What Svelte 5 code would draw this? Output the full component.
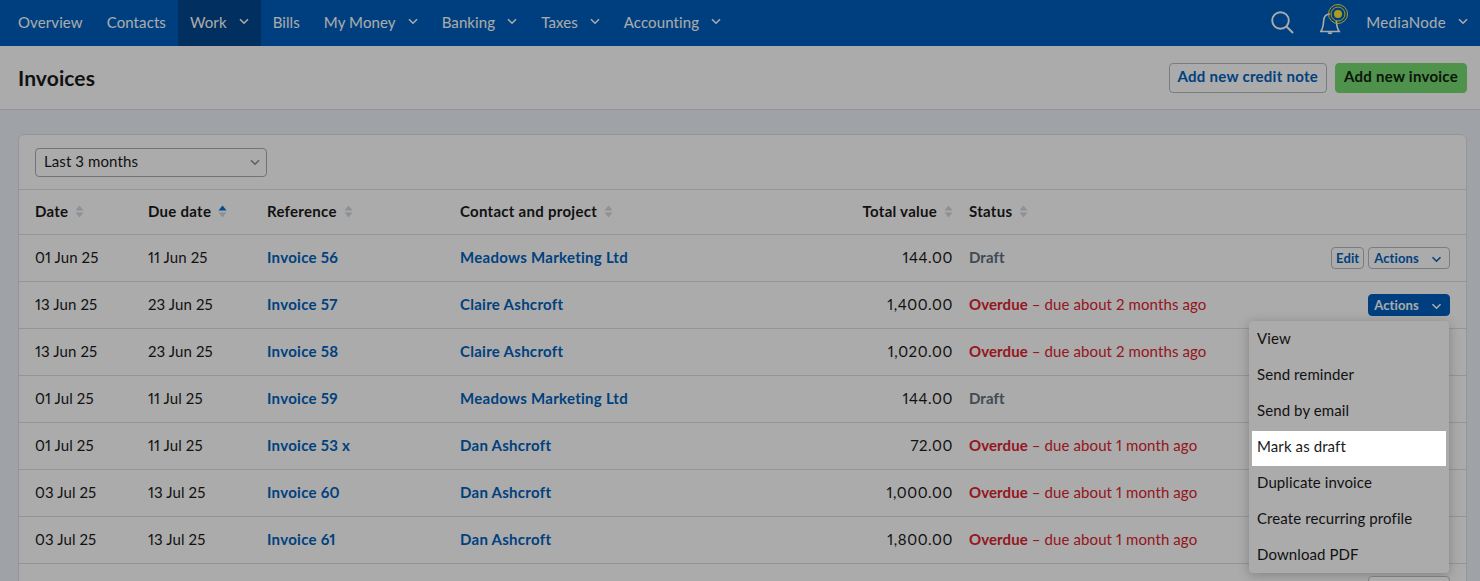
<script>
  const nav = [
    { label: 'Overview' },
    { label: 'Contacts' },
    { label: 'Work', caret: true, active: true },
    { label: 'Bills' },
    { label: 'My Money', caret: true },
    { label: 'Banking', caret: true },
    { label: 'Taxes', caret: true },
    { label: 'Accounting', caret: true }
  ];

  const columns = [
    { label: 'Date' },
    { label: 'Due date', sorted: true },
    { label: 'Reference' },
    { label: 'Contact and project' },
    { label: 'Total value', right: true },
    { label: 'Status' }
  ];

  const rows = [
    { date: '01 Jun 25', due: '11 Jun 25', ref: 'Invoice 56', contact: 'Meadows Marketing Ltd', total: '144.00', status: 'draft', edit: true },
    { date: '13 Jun 25', due: '23 Jun 25', ref: 'Invoice 57', contact: 'Claire Ashcroft', total: '1,400.00', status: 'overdue', ago: 'due about 2 months ago', open: true },
    { date: '13 Jun 25', due: '23 Jun 25', ref: 'Invoice 58', contact: 'Claire Ashcroft', total: '1,020.00', status: 'overdue', ago: 'due about 2 months ago' },
    { date: '01 Jul 25', due: '11 Jul 25', ref: 'Invoice 59', contact: 'Meadows Marketing Ltd', total: '144.00', status: 'draft' },
    { date: '01 Jul 25', due: '11 Jul 25', ref: 'Invoice 53 x', contact: 'Dan Ashcroft', total: '72.00', status: 'overdue', ago: 'due about 1 month ago' },
    { date: '03 Jul 25', due: '13 Jul 25', ref: 'Invoice 60', contact: 'Dan Ashcroft', total: '1,000.00', status: 'overdue', ago: 'due about 1 month ago' },
    { date: '03 Jul 25', due: '13 Jul 25', ref: 'Invoice 61', contact: 'Dan Ashcroft', total: '1,800.00', status: 'overdue', ago: 'due about 1 month ago' },
    { date: '07 Jul 25', due: '17 Jul 25', ref: 'Invoice 62 2', contact: 'Dan Ashcroft', total: '72.00', status: 'overdue', ago: 'due about 1 month ago', actions: true }
  ];

  const menu = ['View', 'Send reminder', 'Send by email', 'Mark as draft', 'Duplicate invoice', 'Create recurring profile', 'Download PDF'];
</script>

{#snippet caret()}
  <svg class="caret" width="10" height="7" viewBox="0 0 10 7"><path d="M1 1.2 5 5.2 9 1.2" fill="none" stroke="currentColor" stroke-width="1.6" /></svg>
{/snippet}

<div class="page">
  <header class="topbar">
    <nav>
      {#each nav as item}
        <a href="#top" class="nav-item" class:active={item.active}>
          {item.label}
          {#if item.caret}{@render caret()}{/if}
        </a>
      {/each}
    </nav>
    <div class="top-right">
      <svg class="search" width="24" height="24" viewBox="0 0 24 24"><circle cx="9.500" cy="9.500" r="8.300" fill="none" stroke="currentColor" stroke-width="1.900" /><path d="M15.500 15.500 22 22" stroke="currentColor" stroke-width="1.900" /></svg>
      <svg class="bell" width="30" height="38" viewBox="0 0 30 38">
        <path d="M10 10C5.500 10 3.800 13.500 3.600 17 3.400 22 2.500 25 0.800 27.500H19.200C17.500 25 16.600 22 16.400 17" fill="none" stroke="#fff" stroke-width="1.600" />
        <path d="M7.500 28.200a2.500 2 0 0 0 5 0" fill="#fff" />
        <circle cx="18" cy="10" r="9.500" fill="none" stroke="#ffe92e" stroke-width="1" />
        <circle cx="18" cy="10" r="7" fill="none" stroke="#ffe92e" stroke-width="1" />
        <circle cx="18" cy="10" r="4" fill="#ffe92e" />
      </svg>
      <a href="#top" class="nav-item user">MediaNode {@render caret()}</a>
    </div>
  </header>

  <div class="titlebar">
    <h1>Invoices</h1>
    <div class="title-actions">
      <button class="btn outline">Add new credit note</button>
      <button class="btn green">Add new invoice</button>
    </div>
  </div>

  <main>
    <section class="card">
      <div class="filter">
        <div class="select">Last 3 months {@render caret()}</div>
      </div>
      <table>
        <colgroup>
          <col /><col /><col /><col /><col /><col /><col />
        </colgroup>
        <thead>
          <tr>
            {#each columns as col}
              <th class:right={col.right}>
                {col.label}
                <svg class="sort" width="9" height="13" viewBox="0 0 9 13">
                  <path d="M4.500 0.500 8.500 5.500H0.500Z" fill={col.sorted ? '#006fd5' : '#d3d7df'} />
                  <path d="M4.500 12.500 8.500 7.500H0.500Z" fill="#d3d7df" />
                </svg>
              </th>
            {/each}
            <th></th>
          </tr>
        </thead>
        <tbody>
          {#each rows as row}
            <tr>
              <td>{row.date}</td>
              <td>{row.due}</td>
              <td><a href="#top" class="link">{row.ref}</a></td>
              <td><a href="#top" class="link">{row.contact}</a></td>
              <td class="right total">{row.total}</td>
              <td>
                {#if row.status === 'draft'}
                  <span class="draft">Draft</span>
                {:else}
                  <span class="overdue"><b>Overdue</b> – {row.ago}</span>
                {/if}
              </td>
              <td class="row-actions">
                <div class="action-wrap">
                  {#if row.edit}<button class="mini edit">Edit</button>{/if}
                  {#if row.edit || row.actions}
                    <button class="mini">Actions {@render caret()}</button>
                  {/if}
                  {#if row.open}
                    <button class="mini open">Actions {@render caret()}</button>
                  {/if}
                </div>
                {#if row.open}
                  <ul class="menu">
                    {#each menu as item}
                      <li class:spot={item === 'Mark as draft'}>{item}</li>
                    {/each}
                  </ul>
                {/if}
              </td>
            </tr>
          {/each}
        </tbody>
      </table>
    </section>
  </main>
  <div class="overlay"></div>
</div>

<style>
  :global(body) {
    margin: 0;
    overflow: hidden;
  }

  .page {
    position: relative;
    height: 581px;
    overflow: hidden;
    background: #edf2fa;
    color: #1a1a1a;
    font-family: Lato, "Noto Sans", sans-serif;
    font-size: 15px;
    letter-spacing: 0.1px;
    font-variant-numeric: proportional-nums;
  }

  .overlay {
    position: absolute;
    inset: 0;
    z-index: 10;
    background: rgba(0, 0, 0, 0.33);
  }

  a {
    text-decoration: none;
  }

  .topbar {
    height: 46px;
    display: flex;
    justify-content: space-between;
    background: #005fbe;
    color: #fff;
  }

  nav {
    display: flex;
    padding-left: 6px;
  }

  .nav-item {
    display: flex;
    align-items: center;
    gap: 12px;
    padding: 0 12px 3px;
    color: #fff;
    letter-spacing: 0.1px;
  }

  .nav-item.active {
    background: #00478f;
  }

  .top-right {
    display: flex;
    align-items: center;
  }

  .search {
    margin-right: 25px;
  }

  .bell {
    margin-right: 4px;
  }

  .user {
    height: 100%;
    letter-spacing: 0.3px;
    box-sizing: border-box;
  }

  .titlebar {
    height: 64px;
    display: flex;
    align-items: center;
    justify-content: space-between;
    padding: 0 13px 0 18px;
    background: #fff;
    border-bottom: 1px solid #dcdfe3;
    box-sizing: border-box;
  }

  h1 {
    margin: 0;
    font-size: 21px;
    font-weight: 700;
    letter-spacing: 0.1px;
  }

  .title-actions {
    display: flex;
    gap: 8px;
  }

  .btn {
    height: 30px;
    padding: 0 8px 3px;
    border-radius: 4px;
    font: 700 15px Lato, sans-serif;
    letter-spacing: 0.27px;
  }

  .btn.outline {
    background: #fff;
    border: 1px solid #b6babf;
    color: #0062bd;
  }

  .btn.green {
    background: #75da71;
    border: 1px solid #75da71;
    color: #14210f;
  }

  main {
    padding: 24px 13px 0 18px;
  }

  .card {
    background: #fff;
    border: 1px solid #dcdfe3;
    border-radius: 6px;
  }

  .filter {
    height: 54px;
    display: flex;
    align-items: center;
    padding-left: 16px;
    border-bottom: 1px solid #dcdfe3;
  }

  .select {
    width: 232px;
    height: 29px;
    box-sizing: border-box;
    padding: 0 6px 2px 8px;
    display: flex;
    align-items: center;
    justify-content: space-between;
    border: 1px solid #a8adb3;
    border-radius: 4px;
  }

  .select .caret {
    color: #8b9299;
    margin-top: 2px;
  }

  table {
    width: 100%;
    table-layout: fixed;
    border-collapse: collapse;
  }

  col:nth-child(1) { width: 121px; }
  col:nth-child(2) { width: 119px; }
  col:nth-child(3) { width: 193px; }
  col:nth-child(4) { width: 290px; }
  col:nth-child(5) { width: 219px; }
  col:nth-child(6) { width: 300px; }

  th, td {
    height: 44px;
    padding: 0 8px 2px;
    text-align: left;
    border-bottom: 1px solid #dcdfe3;
    white-space: nowrap;
  }

  th:first-child, td:first-child {
    padding-left: 16px;
  }

  th {
    height: 42px;
    font-weight: 700;
    letter-spacing: 0.28px;
  }

  .sort {
    margin-left: 3px;
    vertical-align: -1px;
  }

  .right {
    text-align: right;
  }

  .total {
    letter-spacing: 0.6px;
  }

  .link {
    color: #0062bd;
    font-weight: 700;
    letter-spacing: 0.28px;
  }

  .draft {
    color: #5f6f7c;
    font-weight: 700;
  }

  .overdue {
    color: #e0232e;
  }

  .row-actions {
    position: relative;
    padding: 0 16px 0 0;
  }

  .action-wrap {
    display: flex;
    justify-content: flex-end;
    gap: 4px;
  }

  .mini {
    height: 22px;
    padding: 0 7px 1px 5px;
    background: #fff;
    border: 1px solid #b6babf;
    border-radius: 4px;
    color: #0062bd;
    font: 700 13px Lato, sans-serif;
    letter-spacing: 0.1px;
  }

  .mini.edit {
    padding: 0 4px 1px;
  }

  .mini .caret {
    width: 11px;
    margin-left: 9px;
  }

  .mini.open {
    background: #005fbe;
    border-color: #005fbe;
    color: #fff;
  }

  .menu {
    position: absolute;
    top: 39px;
    right: 17px;
    width: 200px;
    margin: 0;
    padding: 0;
    list-style: none;
    text-align: left;
    background: #fff;
    border-radius: 4px;
    box-shadow: 0 2px 12px rgba(0, 0, 0, 0.25);
  }

  .menu li {
    height: 36px;
    line-height: 34px;
    padding: 0 8px;
  }

  .menu li.spot {
    position: relative;
    z-index: 20;
    height: 35px;
    margin: 2px 3px -1px;
    padding: 0 5px;
    line-height: 30px;
    background: #fff;
  }
</style>
